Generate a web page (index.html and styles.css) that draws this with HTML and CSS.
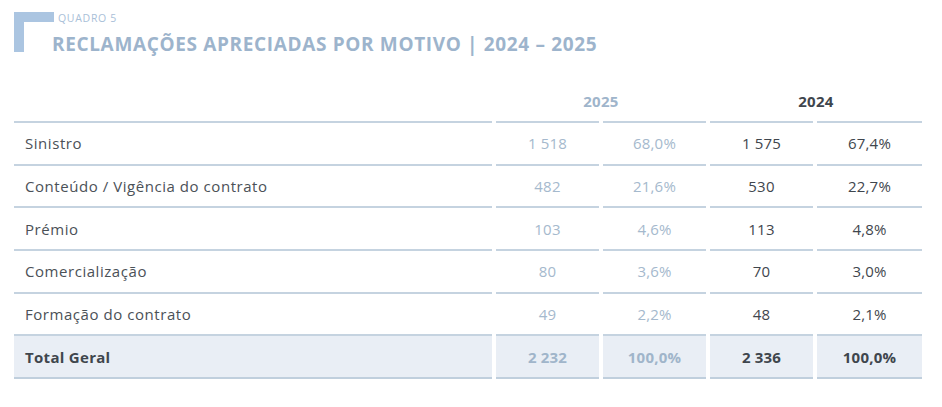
FILE: index.html
```html
<!DOCTYPE html>
<html lang="pt">
<head>
<meta charset="utf-8">
<title>Quadro 5</title>
<link rel="stylesheet" href="styles.css">
</head>
<body>
<div class="page">
  <header class="heading">
    <div class="bracket"></div>
    <div class="titles">
      <div class="kicker">QUADRO 5</div>
      <h1 class="title">RECLAMAÇÕES APRECIADAS POR MOTIVO | 2024 – 2025</h1>
    </div>
  </header>

  <div class="table">
    <div class="hcell hlabel"></div>
    <div class="hcell hyear y25">2025</div>
    <div class="hcell hyear y24">2024</div>

    <div class="cell label">Sinistro</div>
    <div class="cell v25">1 518</div>
    <div class="cell v25">68,0%</div>
    <div class="cell v24">1 575</div>
    <div class="cell v24">67,4%</div>

    <div class="cell label">Conteúdo / Vigência do contrato</div>
    <div class="cell v25">482</div>
    <div class="cell v25">21,6%</div>
    <div class="cell v24">530</div>
    <div class="cell v24">22,7%</div>

    <div class="cell label">Prémio</div>
    <div class="cell v25">103</div>
    <div class="cell v25">4,6%</div>
    <div class="cell v24">113</div>
    <div class="cell v24">4,8%</div>

    <div class="cell label">Comercialização</div>
    <div class="cell v25">80</div>
    <div class="cell v25">3,6%</div>
    <div class="cell v24">70</div>
    <div class="cell v24">3,0%</div>

    <div class="cell label">Formação do contrato</div>
    <div class="cell v25">49</div>
    <div class="cell v25">2,2%</div>
    <div class="cell v24">48</div>
    <div class="cell v24">2,1%</div>

    <div class="cell label total">Total Geral</div>
    <div class="cell v25 total">2 232</div>
    <div class="cell v25 total">100,0%</div>
    <div class="cell v24 total">2 336</div>
    <div class="cell v24 total">100,0%</div>
  </div>
</div>
</body>
</html>
```

FILE: styles.css
```css
html, body {
  margin: 0;
  padding: 0;
  background: #ffffff;
}

.page {
  padding: 12px 0 0 14px;
  font-family: "Open Sans", "Noto Sans", sans-serif;
  color: #4b5157;
}

.heading {
  display: flex;
  height: 68px;
}

.bracket {
  width: 40px;
  height: 40px;
  box-sizing: border-box;
  border-top: 10px solid #abc5e1;
  border-left: 10px solid #abc5e1;
  flex: none;
}

.titles {
  margin-left: -2px;
}

.kicker {
  font-size: 10.5px;
  line-height: 12px;
  color: #a9c0d8;
  margin-left: 6px;
  letter-spacing: 0.7px;
}

.title {
  margin: 10px 0 0 0;
  font-size: 19px;
  line-height: 20px;
  font-weight: 700;
  color: #9db4cc;
  letter-spacing: 0.65px;
}

.table {
  display: grid;
  grid-template-columns: 478px 103px 103px 103px 105px;
  column-gap: 4px;
  width: 908px;
}

.hcell {
  height: 41px;
  display: flex;
  align-items: center;
  justify-content: center;
  font-size: 15px;
  font-weight: 700;
  letter-spacing: 0.3px;
}

.hyear {
  grid-column: span 2;
}

.y25 { color: #9fb5cb; }
.y24 { color: #3f464d; }

.cell {
  height: 40.67px;
  border-top: 2px solid #c5d3e0;
  display: flex;
  align-items: center;
  justify-content: center;
  font-size: 15px;
  letter-spacing: 0.2px;
}

.label {
  justify-content: flex-start;
  padding-left: 11px;
  color: #4b5157;
  letter-spacing: 0.55px;
}

.v25 { color: #a5b9cd; }
.v24 { color: #3f464d; }

.total {
  background: #e9eef5;
  font-weight: 700;
  border-bottom: 2px solid #c0cfdd;
}

.label.total { color: #3f464d; letter-spacing: 0.3px; }
.v25.total { color: #a0b5ca; }
```
